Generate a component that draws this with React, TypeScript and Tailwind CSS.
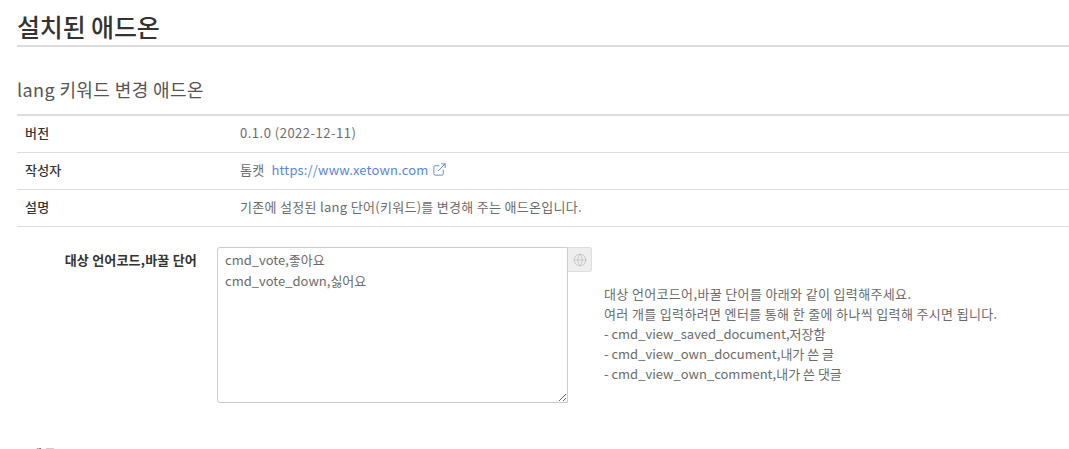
import { ExternalLink, Globe } from 'lucide-react'

const font = "font-['Noto_Sans_CJK_KR','Noto_Sans',sans-serif]"

function InfoRow({ label, children }: { label: string; children: React.ReactNode }) {
  return (
    <div className="flex h-[37px] items-center border-b border-[#ddd] pb-[3px] pl-2 text-[13px]">
      <div className="w-[215px] font-medium tracking-[0.2px] text-[#333]">{label}</div>
      <div className="flex items-center tracking-[0.3px] text-[#6b6b6b]">{children}</div>
    </div>
  )
}

export default function App() {
  return (
    <div className={`${font} h-[449px] w-[1069px] overflow-hidden bg-white pl-[17px]`}>
      <h1 className="flex h-[47px] items-end border-b-2 border-[#ddd] pb-[1px] text-[25px] leading-[36px] font-medium tracking-[-0.15px] text-[#333]">
        설치된 애드온
      </h1>
      <h2 className="mt-[28px] h-[39px] text-[18px] leading-[28px] font-normal tracking-[0.4px] text-[#555]">lang 키워드 변경 애드온</h2>

      <div className="border-t-2 border-[#ddd]">
        <InfoRow label="버전">
          <span className="tracking-[0.5px]">0.1.0 (2022-12-11)</span>
        </InfoRow>
        <InfoRow label="작성자">
          <span>톰캣</span>
          <a className="ml-[7px] tracking-[0.15px] text-[#5a86d8]">https://www.xetown.com</a>
          <ExternalLink className="ml-[4px] size-[15px] text-[#5a86d8]" strokeWidth={1.5} />
        </InfoRow>
        <InfoRow label="설명">기존에 설정된 lang 단어(키워드)를 변경해 주는 애드온입니다.</InfoRow>
      </div>

      <div className="mt-[20px] flex items-start">
        <label className="mt-[3px] w-[180px] text-right text-[13px] leading-[20px] font-bold tracking-[0.2px] text-[#333]">
          대상 언어코드,바꿀 단어
        </label>
        <textarea
          readOnly
          defaultValue={'cmd_vote,좋아요\ncmd_vote_down,싫어요'}
          className="ml-[20px] h-[156px] w-[351px] rounded-l-[3px] border border-[#ccc] px-[7px] py-[1px] text-[13px] leading-[21px] text-[#6b6b6b] outline-none"
        />
        <button className="flex h-[25px] w-[24px] items-center justify-center rounded-r-[3px] border border-l-0 border-[#ddd] bg-[#eee]">
          <Globe className="size-[14px] text-[#bbb]" strokeWidth={1.25} />
        </button>
        <div className="mt-[37px] ml-[12px] text-[13px] leading-[20px] text-[#6b6b6b]">
          <p className="tracking-[0.35px]">대상 언어코드어,바꿀 단어를 아래와 같이 입력해주세요.</p>
          <p className="tracking-[0.35px]">여러 개를 입력하려면 엔터를 통해 한 줄에 하나씩 입력해 주시면 됩니다.</p>
          <p>- cmd_view_saved_document,저장함</p>
          <p>- cmd_view_own_document,내가 쓴 글</p>
          <p>- cmd_view_own_comment,내가 쓴 댓글</p>
        </div>
      </div>

      <div className="mt-[41px] pl-[13px] text-[13px] leading-[20px] font-bold tracking-[2px] text-[#333]">제목</div>
    </div>
  )
}
